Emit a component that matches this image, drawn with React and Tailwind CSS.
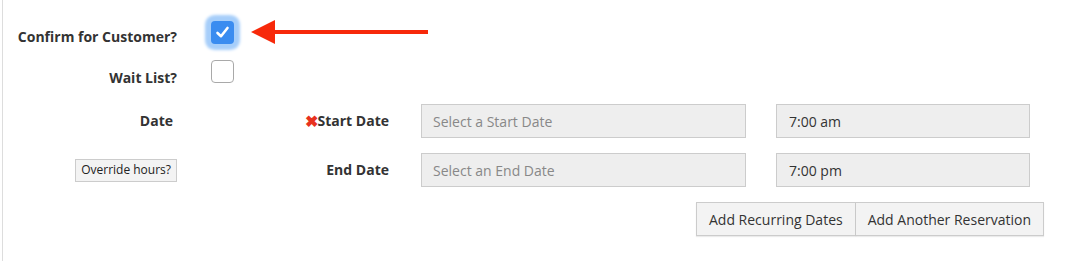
import React from 'react'

const font = { fontFamily: '"Open Sans", "Liberation Sans", sans-serif' }

function Label({ children, className = '' }) {
    return (
        <div className={`text-[14px] leading-[20px] font-bold text-[#333] text-right whitespace-nowrap ${className}`}>
            {children}
        </div>
    )
}

function Field({ value, placeholder, className = '' }) {
    return (
        <div className={`h-[34px] bg-[#eee] border border-[#ccc] flex items-center text-[14px] ${className}`}>
            {value ? <span className="text-[#333]">{value}</span> : <span className="text-[#888]">{placeholder}</span>}
        </div>
    )
}

export default function App() {
    return (
        <div style={font} className="h-[261px] w-[1081px] bg-white overflow-hidden">
            <div className="ml-[2px] h-full border-l border-[#ddd]">
                {/* Confirm for Customer */}
                <div className="flex items-start pt-[21px]">
                    <Label className="w-[174px] mt-[6px]">Confirm for Customer?</Label>
                    <div className="ml-[34px] w-[23px] h-[23px] rounded-[4px] bg-[#3a8cf0] flex items-center justify-center shadow-[0_0_3px_6px_#a6cefa]">
                        <svg width="15" height="15" viewBox="0 0 15 15">
                            <path d="M2.5 8 L6 11.2 L12.5 3" fill="none" stroke="white" strokeWidth="2.6" strokeLinecap="round" strokeLinejoin="round" />
                        </svg>
                    </div>
                    <svg className="ml-[17px] mt-[-2px]" width="178" height="26" viewBox="0 0 178 26">
                        <polygon points="0,13 24,1 24,25" fill="#f7290a" />
                        <rect x="22" y="11" width="155" height="4" fill="#f7290a" />
                    </svg>
                </div>

                {/* Wait List */}
                <div className="flex items-start mt-[13px]">
                    <Label className="w-[174px] mt-[8px]">Wait List?</Label>
                    <div className="ml-[34px] w-[23px] h-[23px] rounded-[4px] border-[1.5px] border-[#a9a9a9] bg-white" />
                </div>

                {/* Start Date */}
                <div className="flex items-center mt-[16px]">
                    <Label className="w-[170px]">Date</Label>
                    <div className="w-[216px] flex justify-end items-center">
                        <span className="text-[#e8321e] text-[16px] leading-none font-bold">✖</span>
                        <Label>Start Date</Label>
                    </div>
                    <Field className="ml-[32px] w-[325px] pl-[11px]" placeholder="Select a Start Date" />
                    <Field className="ml-[30px] w-[254px] pl-[12px]" value="7:00 am" />
                </div>

                {/* End Date */}
                <div className="flex items-center mt-[15px]">
                    <div className="w-[174px] flex justify-end">
                        <button className="h-[23px] px-[5px] bg-[#f3f3f3] border border-[#ccc] text-[12px] text-[#222] leading-none">
                            Override hours?
                        </button>
                    </div>
                    <Label className="w-[212px]">End Date</Label>
                    <Field className="ml-[32px] w-[325px] pl-[11px]" placeholder="Select an End Date" />
                    <Field className="ml-[30px] w-[254px] pl-[12px]" value="7:00 pm" />
                </div>

                {/* Buttons */}
                <div className="flex mt-[15px] ml-[693px]">
                    <button className="h-[34px] px-[12px] bg-[#f3f3f3] border border-[#ccc] text-[14px] text-[#333] shadow-[0_1px_1px_rgba(0,0,0,0.08)]">
                        Add Recurring Dates
                    </button>
                    <button className="h-[34px] px-[12px] bg-[#f3f3f3] border border-l-0 border-[#ccc] text-[14px] text-[#333] shadow-[0_1px_1px_rgba(0,0,0,0.08)]">
                        Add Another Reservation
                    </button>
                </div>
            </div>
        </div>
    )
}
